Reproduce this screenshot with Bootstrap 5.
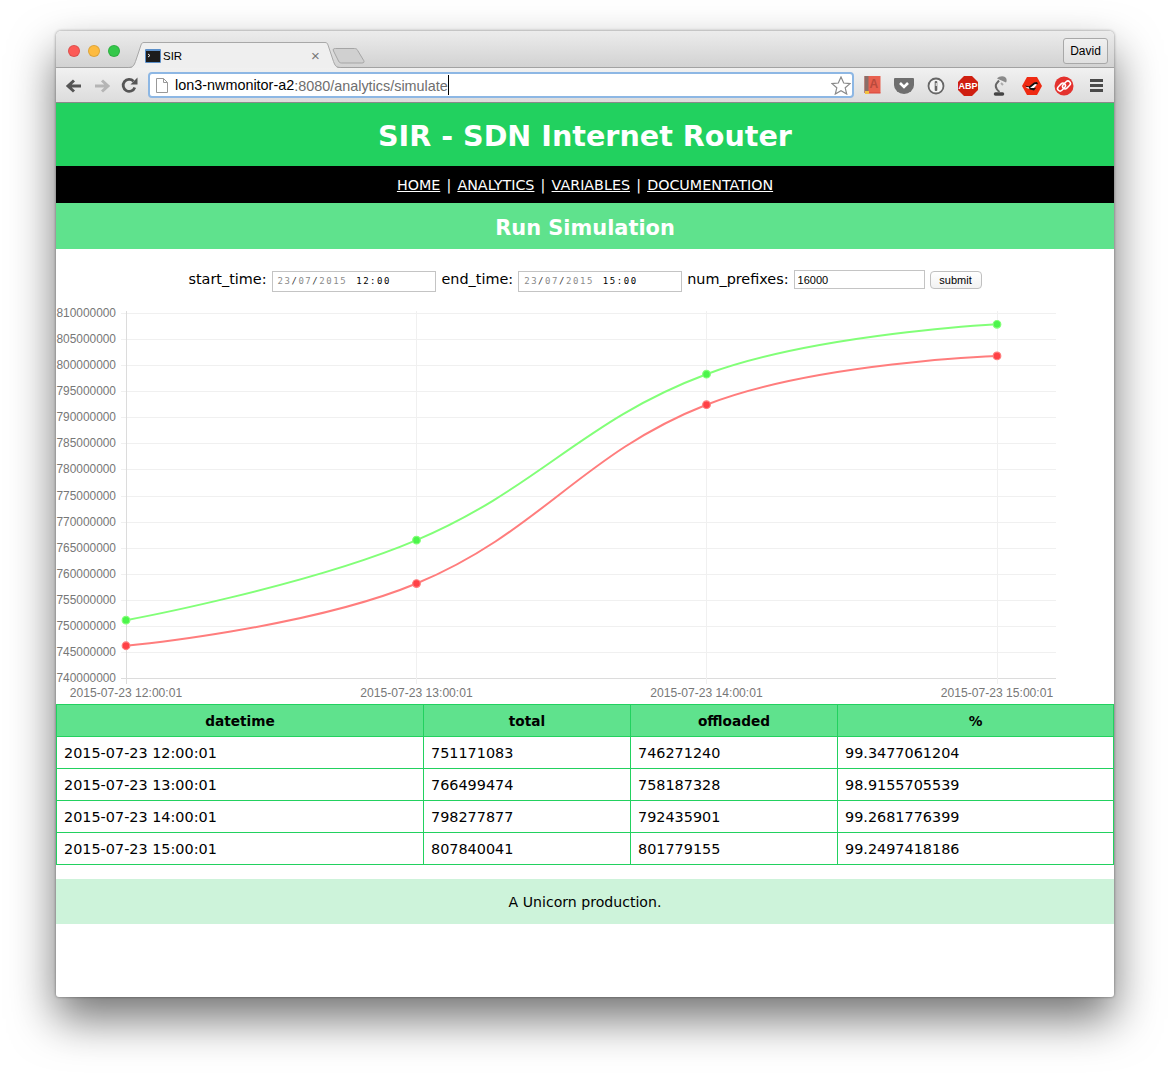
<!DOCTYPE html>
<html lang="en">
<head>
  <meta charset="UTF-8" />
  <title>SIR</title>
  <link href="https://cdn.jsdelivr.net/npm/bootstrap@5.3.2/dist/css/bootstrap.min.css" rel="stylesheet" />
  <style>
    html, body { background: #fff; height: 1077px; overflow: hidden; }
    body { padding: 31px 56px 0; font-family: "DejaVu Sans", sans-serif; color: #000; }
    .win { width: 1058px; height: 966px; background: #fff; border-radius: 5px 5px 3px 3px; box-shadow: 0 22px 45px rgba(0,0,0,.55), 0 0 3px rgba(0,0,0,.45); overflow: hidden; }
    .chrome-ui { font-family: "Liberation Sans", sans-serif; }
    .tabstrip { height: 37px; background: linear-gradient(#ececec, #d2d2d2); border-bottom: 1px solid #a2a2a2; padding-left: 12px; position: relative; }
    .light { width: 12px; height: 12px; border-radius: 50%; border: 1px solid rgba(0,0,0,.12); }
    .tab-shape { position: absolute; left: 72px; top: 11px; }
    .tab-title { position: absolute; left: 107px; top: 18px; font-size: 11.5px; line-height: 14px; }
    .tab-close { position: absolute; left: 255px; top: 18px; font-size: 15px; line-height: 14px; color: #777; }
    .user-btn { position: absolute; right: 6px; top: 7px; width: 45px; height: 26px; border: 1px solid #a8a8a8; border-radius: 3px; background: linear-gradient(#f0f0f0, #e0e0e0); font-size: 12px; line-height: 24px; text-align: center; }
    .toolbar { height: 35px; background: linear-gradient(#f1f1f1, #dcdcdc); border-bottom: 1px solid #8a8a8a; padding-left: 9px; }
    .nav-ico { width: 28px; }
    .urlbar { width: 706px; height: 26px; background: #fff; border: 2px solid #8db7e4; border-radius: 4px; padding-left: 6px; font-size: 14.4px; }
    .urlbar b { font-weight: 400; color: #000; padding-top: 2px; }
    .urlbar span { color: #6e6e6e; border-right: 1px solid #000; line-height: 18px; padding-top: 2px; }
    .ext-ico { width: 32px; }
    .site-head { height: 63px; background: #22d15f; color: #fff; font-size: 28.6px; font-weight: 700; line-height: 67px; text-align: center; margin: 0; }
    .site-nav { height: 37px; background: #000; color: #fff; font-size: 14.3px; line-height: 38px; text-align: center; word-spacing: 1.6px; }
    .site-nav a { color: #fff; }
    .site-sub { height: 46px; background: #5fe28d; color: #fff; font-size: 20.9px; font-weight: 700; line-height: 51px; text-align: center; margin: 0; }
    .sim-form { height: 56px; padding-top: 20px; font-size: 14.4px; gap: 5px; line-height: 20px; }
    .lab-end { margin-left: 1px; }
    .date-box { width: 164px; height: 21px; border: 1px solid #c4c4c4; margin-top: 2px; padding-left: 5px; font-family: "DejaVu Sans Mono", monospace; font-size: 9px; letter-spacing: 1.55px; line-height: 19px; color: #8c8c8c; white-space: pre; }
    .date-box em { font-style: normal; color: #333; }
    .date-box i { font-style: normal; color: #000; margin-left: 9px; letter-spacing: 1.55px; }
    .num-input { width: 131px; height: 19px; border: 1px solid #c4c4c4; padding: 0 3px; font: 11px "Liberation Sans", sans-serif; margin-top: 1px; color: #000; outline: 0; }
    .sub-btn { width: 52px; height: 18px; margin-top: 2px; border: 1px solid #c0c0c0; border-radius: 4px; background: linear-gradient(#fff, #f2f2f2); font: 11px/14px "Liberation Sans", sans-serif; padding: 0; color: #000; }
    .plot { display: block; height: 399px; }
    .plot text { font: 11.9px "Liberation Sans", sans-serif; fill: #777; }
    .plot text.xlab { font-size: 12.1px; }
    .sim-table { --bs-table-border-color: #22d15f; font-size: 14.4px; margin: 0; table-layout: fixed; border-color: #22d15f; }
    .sim-table th, .sim-table td { padding: 1px 7px 0; height: 32px; line-height: 30px; color: #000; }
    .sim-table thead th { background: #5fe28d; text-align: center; font-size: 13.7px; }
    .site-foot { height: 45px; margin-top: 14px; background: #cdf3da; font-size: 14.1px; line-height: 47px; text-align: center; }
  </style>
</head>
<body>
  <div class="win">
    <div class="tabstrip chrome-ui d-flex align-items-start">
      <div class="d-flex gap-2" style="padding-top:14px">
        <div class="light" style="background:#fc5b57"></div>
        <div class="light" style="background:#fdbb40"></div>
        <div class="light" style="background:#34c84a"></div>
      </div>
      <svg class="tab-shape" width="240" height="26" viewBox="0 0 240 26">
        <path d="M207.500 6.500h19c1.500 0 2.500.5 3.200 2l6 10c.8 1.800 0 2.500-2 2.500h-20c-1.500 0-2.500-.5-3.200-2l-5-10c-.8-2 0-2.500 2-2.500z" fill="#d0d0d0" stroke="#a5a5a5"/>
        <path d="M0 26c5 0 6-2 7.500-6L13 3c.6-2 1.500-2.500 3-2.500h181c1.500 0 2.400.5 3 2.500l5.500 17c1.500 4 2.500 6 7.500 6z" fill="#efefef"/>
        <path d="M0 25.500c5 0 6-2 7.500-6L13 3c.6-2 1.500-2.500 3-2.500h181c1.500 0 2.400.5 3 2.500l5.500 16.500c1.500 4 2.500 6 7.500 6" fill="none" stroke="#a8a8a8"/>
      </svg>
      <svg style="position:absolute;left:89px;top:18px" width="16" height="14" viewBox="0 0 16 14">
        <rect width="16" height="14" rx="1" fill="#5b8fc9"/><rect x="1" y="2" width="14" height="11" fill="#1c1c1c"/>
        <path d="M3 5l2 1.500L3 8" fill="none" stroke="#eee"/>
      </svg>
      <div class="tab-title">SIR</div>
      <div class="tab-close">×</div>
      <div class="user-btn">David</div>
    </div>
    <div class="toolbar chrome-ui d-flex align-items-center">
      <div class="nav-ico">
        <svg width="18" height="16" viewBox="0 0 18 16"><path d="M16 8H4M9 2.500L3 8l6 5.500" fill="none" stroke="#555" stroke-width="3"/></svg>
      </div>
      <div class="nav-ico">
        <svg width="18" height="16" viewBox="0 0 18 16"><path d="M2 8h12M9 2.500L15 8l-6 5.500" fill="none" stroke="#b5b5b5" stroke-width="3"/></svg>
      </div>
      <div class="nav-ico" style="width:27px">
        <svg width="17" height="17" viewBox="0 0 17 17"><path d="M13.800 10.500A6 6 0 1 1 12.500 4.200" fill="none" stroke="#555" stroke-width="2.800"/><path d="M9.500 7.500h7v-7z" fill="#555"/></svg>
      </div>
      <div class="urlbar d-flex align-items-center position-relative">
        <svg class="flex-shrink-0" style="margin-right:7px" width="12" height="15" viewBox="0 0 12 15"><path d="M.5.500h7l4 4v10H.5zM7.500.500v4h4" fill="#fff" stroke="#999"/></svg>
        <b>lon3-nwmonitor-a2</b><span>:8080/analytics/simulate</span>
        <svg class="position-absolute" style="right:1px;top:2px" width="20" height="19" viewBox="0 0 20 19"><path d="M10 1l2.700 6 6.300.6-4.800 4.200 1.500 6.200L10 14.700 4.300 18l1.500-6.200L1 7.600 7.300 7z" fill="#fff" stroke="#8a8a8a" stroke-width="1.200"/></svg>
      </div>
      <div class="d-flex" style="margin-left:2px">
        <div class="ext-ico text-center"><svg width="17" height="19" viewBox="0 0 17 19"><rect width="16" height="17" x="0.500" fill="#e8604f"/><rect width="4" height="17" x="0.500" fill="#8a6e68"/><rect x="1" y="15" width="4" height="3" fill="#f2c040"/><rect x="5" y="16.500" width="11.500" height="1" fill="#d9443a"/><text x="5.500" y="12" font-size="12" font-weight="700" fill="#b84a3c">A</text></svg></div>
        <div class="ext-ico text-center"><svg width="20" height="17" viewBox="0 0 20 17"><path d="M1 1h18a1 1 0 0 1 1 1v6a10 9 0 0 1-20 0V2a1 1 0 0 1 1-1z" fill="#6f6f6f"/><path d="M6 6l4 4 4-4" fill="none" stroke="#fff" stroke-width="2.600"/></svg></div>
        <div class="ext-ico text-center"><svg width="18" height="18" viewBox="0 0 18 18"><circle cx="9" cy="9" r="7.500" fill="#f4f4f4" stroke="#666" stroke-width="1.800"/><rect x="7.700" y="4" width="2.600" height="10" rx="1" fill="#666"/><rect x="8.700" y="6" width="1" height="3" fill="#fff"/></svg></div>
        <div class="ext-ico text-center"><svg width="20" height="20" viewBox="0 0 20 20"><path d="M6 0h8l6 6v8l-6 6H6l-6-6V6z" fill="#cf1f10"/><text x="10" y="13.400" text-anchor="middle" font-family="Liberation Sans" font-size="9" font-weight="700" fill="#fff">ABP</text></svg></div>
        <div class="ext-ico text-center"><svg width="15" height="21" viewBox="0 0 15 21"><path d="M2.500 19h7" stroke="#444" stroke-width="3.500" stroke-linecap="round"/><path d="M6.500 17C3 14 2 11 3.500 8.500L6 5.500" fill="none" stroke="#666" stroke-width="2"/><path d="M4 3.500c2-2.500 6-3 8-1.500 2 1.500 2 4 1 5.500z" fill="#8a8a8a"/><path d="M8 8l2 2" stroke="#aaa" stroke-width="2"/></svg></div>
        <div class="ext-ico text-center"><svg width="20" height="18" viewBox="0 0 20 18"><path d="M5 0h10l5 9-5 9H5L0 9z" fill="#ef2a12"/><path d="M3 8.500l4 1 5-4 3-.5 1 2-3 1-2 2 3 1-2 2.500-4-1z" fill="#111"/><path d="M8 11l5-4 2 .5-3 3.500z" fill="#fff"/><path d="M3.500 10.500l3-.5 1 2z" fill="#fff"/></svg></div>
        <div class="ext-ico text-center"><svg width="20" height="20" viewBox="0 0 20 20"><circle cx="10" cy="10" r="9.500" fill="#e4322e"/><g transform="rotate(-45 10 10)" fill="none" stroke="#fff" stroke-width="1.500"><rect x="3" y="6.500" width="9" height="5" rx="2.500"/><rect x="8" y="8.500" width="9" height="5" rx="2.500"/></g></svg></div>
        <div class="ext-ico text-center"><svg width="13" height="13" viewBox="0 0 13 13"><path d="M0 0h13v3H0zM0 5h13v3H0zM0 10h13v3H0z" fill="#4a4a4a"/></svg></div>
      </div>
    </div>

    <h1 class="site-head">SIR - SDN Internet Router</h1>
    <div class="site-nav"><a href="#">HOME</a> | <a href="#">ANALYTICS</a> | <a href="#">VARIABLES</a> | <a href="#">DOCUMENTATION</a></div>
    <h2 class="site-sub">Run Simulation</h2>

    <form class="sim-form d-flex justify-content-center align-items-start">
      <label>start_time:</label>
      <div class="date-box">23<em>/</em>07<em>/</em>2015<i>12:00</i></div>
      <label class="lab-end">end_time:</label>
      <div class="date-box">23<em>/</em>07<em>/</em>2015<i>15:00</i></div>
      <label>num_prefixes:</label>
      <input class="num-input" type="text" value="16000" />
      <button class="sub-btn" type="button">submit</button>
    </form>

    <svg class="plot" id="plot" width="1058" height="399" viewBox="56 305 1058 399"></svg>

    <table class="table table-bordered sim-table">
      <colgroup><col style="width:367px"><col style="width:207px"><col style="width:207px"><col></colgroup>
      <thead>
        <tr><th>datetime</th><th>total</th><th>offloaded</th><th>%</th></tr>
      </thead>
      <tbody>
        <tr><td>2015-07-23 12:00:01</td><td>751171083</td><td>746271240</td><td>99.3477061204</td></tr>
        <tr><td>2015-07-23 13:00:01</td><td>766499474</td><td>758187328</td><td>98.9155705539</td></tr>
        <tr><td>2015-07-23 14:00:01</td><td>798277877</td><td>792435901</td><td>99.2681776399</td></tr>
        <tr><td>2015-07-23 15:00:01</td><td>807840041</td><td>801779155</td><td>99.2497418186</td></tr>
      </tbody>
    </table>

    <div class="site-foot">A Unicorn production.</div>
  </div>

  <script>
    const labels = ["2015-07-23 12:00:01", "2015-07-23 13:00:01", "2015-07-23 14:00:01", "2015-07-23 15:00:01"];
    const total = [751171083, 766499474, 798277877, 807840041];
    const offloaded = [746271240, 758187328, 792435901, 801779155];
    const xs = [126, 416.5, 706.5, 997];
    const yOf = (v) => 678.5 - (v - 740000000) / 70000000 * 365.5;

    const curve = (pts) => {
      // same spline as chart.js, tension 0.4, none on the two end points
      const ctl = pts.map((p, i) => {
        if (i === 0 || i === pts.length - 1) return { inn: p, out: p };
        const a = pts[i - 1], b = pts[i + 1];
        const d1 = Math.hypot(p[0] - a[0], p[1] - a[1]), d2 = Math.hypot(b[0] - p[0], b[1] - p[1]);
        const fa = 0.4 * d1 / (d1 + d2), fb = 0.4 * d2 / (d1 + d2);
        return { inn: [p[0] - fa * (b[0] - a[0]), p[1] - fa * (b[1] - a[1])], out: [p[0] + fb * (b[0] - a[0]), p[1] + fb * (b[1] - a[1])] };
      });
      let d = `M${pts[0]}`;
      for (let i = 1; i < pts.length; i++) d += `C${ctl[i - 1].out} ${ctl[i].inn} ${pts[i]}`;
      return d;
    };

    let html = "";
    for (let i = 0; i <= 14; i++) {
      const y = Math.round(678 - i * 26.07) + 0.5;
      html += `<path d="M121 ${y}H1056" stroke="${i ? "#f0f0f0" : "#dcdcdc"}"/>`;
      html += `<text x="116" y="${y + 3}" text-anchor="end">${740000000 + i * 5000000}</text>`;
    }
    xs.forEach((x, i) => {
      const px = Math.floor(x) + 0.5;
      html += `<path d="M${px} 311V684" stroke="${i ? "#f0f0f0" : "#dcdcdc"}"/>`;
      html += `<text class="xlab" x="${x}" y="697" text-anchor="middle">${labels[i]}</text>`;
    });
    [[total, "rgb(130,255,120)", "rgb(75,245,75)"], [offloaded, "rgb(255,125,125)", "rgb(255,65,70)"]].forEach(([vals, line, dot]) => {
      const pts = vals.map((v, i) => [xs[i], yOf(v)]);
      html += `<path d="${curve(pts)}" fill="none" stroke="${line}" stroke-width="2"/>`;
      pts.forEach((p) => {
        html += `<circle cx="${p[0]}" cy="${p[1]}" r="3.800" fill="${dot}" stroke="${line}" stroke-width="1.200"/>`;
      });
    });
    document.getElementById("plot").innerHTML = html;
  </script>
  <script src="https://cdn.jsdelivr.net/npm/bootstrap@5.3.2/dist/js/bootstrap.bundle.min.js"></script>
</body>
</html>
